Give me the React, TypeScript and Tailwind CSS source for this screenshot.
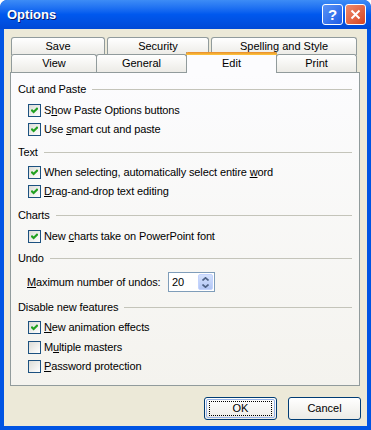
import React from "react";

const font = { fontFamily: '"Liberation Sans", Arial, sans-serif' };

function Check({ checked }: { checked?: boolean }) {
  return (
    <span className="w-[13px] h-[13px] border border-[#1c5180] bg-gradient-to-br from-[#dcdcd7] to-white flex items-center justify-center shrink-0">
      {checked && (
        <svg width="7" height="7" viewBox="0 0 7 7">
          <path d="M0.3 2.8 L2.6 5.1 L6.7 1" stroke="#21a121" strokeWidth="2.1" fill="none" />
        </svg>
      )}
    </span>
  );
}

function CheckRow({ checked, children, mt }: { checked?: boolean; children: React.ReactNode; mt: string }) {
  return (
    <div className={`h-[19px] flex items-center pl-[10px] ${mt}`}>
      <Check checked={checked} />
      <span className="ml-[3px] text-[11px] text-black leading-none tracking-[-0.12px]">{children}</span>
    </div>
  );
}

function Group({ label, mt }: { label: string; mt: string }) {
  return (
    <div className={`h-[19px] flex items-center ${mt}`}>
      <span className="text-[11px] text-black leading-none tracking-[-0.12px]">{label}</span>
      <div className="flex-1 ml-[6px] h-px bg-[#c4c4ba]" />
    </div>
  );
}

function Tab({ w, label, cls = "" }: { w: string; label: string; cls?: string }) {
  return (
    <div
      className={`${w} h-[18px] border border-b-0 border-[#919b9c] rounded-t-[3px] bg-gradient-to-b from-white to-[#ecebe6] flex items-center justify-center text-[11px] text-black leading-none ${cls}`}
    >
      {label}
    </div>
  );
}

export default function App() {
  return (
    <div className="w-[371px] h-[430px] flex flex-col bg-[#0054e3] rounded-t-[7px] overflow-hidden" style={font}>
      {/* Title bar */}
      <div className="h-[29px] shrink-0 flex items-center pl-[7px] pr-[5px] bg-gradient-to-b from-[#3d8cf6] via-[#0058ee] to-[#0049d6] rounded-t-[7px]">
        <span
          className="text-[13px] font-bold text-white flex-1"
          style={{ textShadow: "1px 1px 0 #0a1c6e" }}
        >
          Options
        </span>
        <div className="flex gap-[2px]">
          <div className="w-[21px] h-[21px] rounded-[3px] border border-white bg-gradient-to-br from-[#5a93f5] to-[#1d5be6] flex items-center justify-center">
            <span className="text-white font-bold text-[15px] leading-none">?</span>
          </div>
          <div className="w-[21px] h-[21px] rounded-[3px] border border-white bg-gradient-to-br from-[#ee8a6c] to-[#d6421c] flex items-center justify-center">
            <svg width="11" height="11" viewBox="0 0 11 11">
              <path d="M1.5 1.5 L9.5 9.5 M9.5 1.5 L1.5 9.5" stroke="white" strokeWidth="2" />
            </svg>
          </div>
        </div>
      </div>
      {/* Client */}
      <div className="flex-1 mx-[4px] mb-[4px] bg-[#ece9d8] flex flex-col">
        {/* Tabs */}
        <div className="mt-[8px] ml-[7px] flex gap-[2px]">
          <Tab w="w-[94px]" label="Save" />
          <Tab w="w-[102px]" label="Security" />
          <Tab w="w-[146px]" label="Spelling and Style" />
        </div>
        <div className="ml-[7px] flex items-end h-[17px] relative z-10">
          <Tab w="w-[86px]" label="View" cls="h-[17px]" />
          <Tab w="w-[91px]" label="General" cls="h-[17px] -ml-px" />
          <div className="w-[91px] -ml-px h-[21px] -mb-px border-x border-[#919b9c] bg-[#fcfcfe] flex flex-col">
            <div className="h-[3px] rounded-t-[2px] -mx-px" style={{ background: "linear-gradient(#e68b2c,#ffc73c)" }} />
            <div className="flex-1 flex items-center justify-center text-[11px] text-black leading-none pb-[2px]">Edit</div>
          </div>
          <Tab w="w-[81px]" label="Print" cls="h-[17px] -ml-px" />
        </div>
        {/* Panel */}
        <div className="ml-[6px] w-[350px] h-[314px] border border-[#919b9c] bg-gradient-to-b from-[#fcfcfe] to-[#f4f3ee] pt-[7px] pl-[7px] pr-[7px] flex flex-col">
          <Group label="Cut and Paste" mt="mt-0" />
          <CheckRow checked mt="mt-[2px]">S<u>h</u>ow Paste Options buttons</CheckRow>
          <CheckRow checked mt="mt-0">Use <u>s</u>mart cut and paste</CheckRow>
          <Group label="Text" mt="mt-[4px]" />
          <CheckRow checked mt="mt-[1px]">When selecting, automatically select entire <u>w</u>ord</CheckRow>
          <CheckRow checked mt="mt-0"><u>D</u>rag-and-drop text editing</CheckRow>
          <Group label="Charts" mt="mt-[5px]" />
          <CheckRow checked mt="mt-[2px]">New <u>c</u>harts take on PowerPoint font</CheckRow>
          <Group label="Undo" mt="mt-[3px]" />
          <div className="mt-[4px] h-[20px] flex items-center pl-[9px]">
            <span className="text-[11px] text-black leading-none tracking-[-0.12px] w-[141px]"><u>M</u>aximum number of undos:</span>
            <div className="w-[47px] h-[20px] border border-[#7f9db9] bg-white flex items-center">
              <span className="flex-1 pl-[3px] text-[11px] text-black leading-none">20</span>
              <div className="w-[15px] h-[16px] mr-px rounded-[2px] bg-gradient-to-b from-[#d3e0fc] to-[#b2c6f5] border border-[#c3d3fd] flex flex-col items-center justify-center gap-[3px]">
                <svg width="7" height="4" viewBox="0 0 7 4"><path d="M0.5 3.5 L3.5 0.8 L6.5 3.5" stroke="#4d6185" strokeWidth="1.6" fill="none" /></svg>
                <svg width="7" height="4" viewBox="0 0 7 4"><path d="M0.5 0.5 L3.5 3.2 L6.5 0.5" stroke="#4d6185" strokeWidth="1.6" fill="none" /></svg>
              </div>
            </div>
          </div>
          <Group label="Disable new features" mt="mt-[6px]" />
          <CheckRow checked mt="mt-[1px]"><u>N</u>ew animation effects</CheckRow>
          <CheckRow mt="mt-[1px]">M<u>u</u>ltiple masters</CheckRow>
          <CheckRow mt="mt-0"><u>P</u>assword protection</CheckRow>
        </div>
        {/* Buttons */}
        <div className="mt-[11px] flex justify-end gap-[11px] pr-[6px]">
          <div className="w-[73px] h-[23px] rounded-[3px] border border-[#003c74] bg-gradient-to-b from-white to-[#ecebe6] p-px">
            <div className="w-full h-full rounded-[2px] border border-[#98b4e8] flex items-center justify-center">
              <div className="w-[63px] h-[15px] border border-dotted border-black flex items-center justify-center text-[11px] text-black leading-none">OK</div>
            </div>
          </div>
          <div className="w-[73px] h-[23px] rounded-[3px] border border-[#003c74] bg-gradient-to-b from-white to-[#ecebe6] flex items-center justify-center text-[11px] text-black leading-none">
            Cancel
          </div>
        </div>
      </div>
    </div>
  );
}
